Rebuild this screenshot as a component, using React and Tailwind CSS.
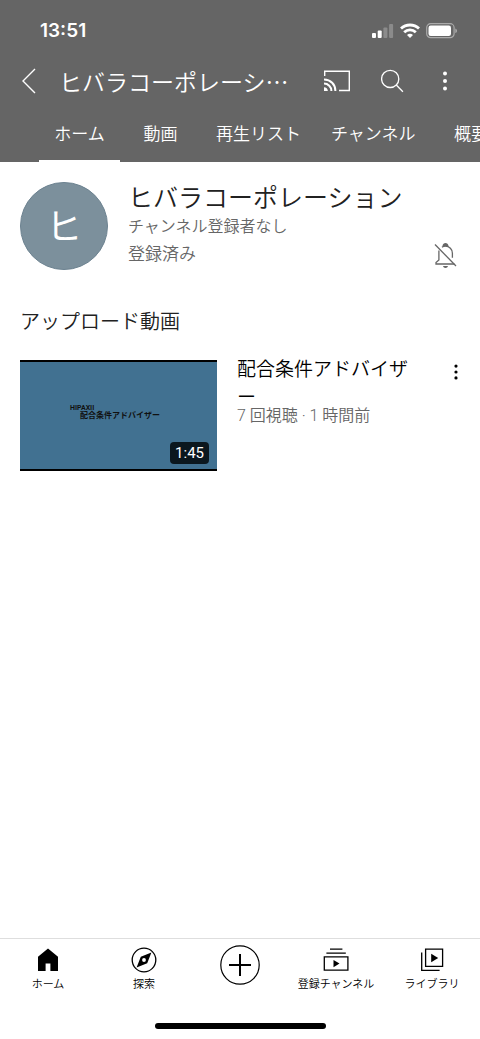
import { useState } from 'react'
import clsx from 'clsx'

const TABS = ['ホーム', '動画', '再生リスト', 'チャンネル', '概要']

const SignalIcon = () => (
  <svg width="22" height="16" viewBox="0 0 22 16" fill="#fff" aria-hidden="true">
    <rect x="0" y="10" width="4" height="5" rx="1" />
    <rect x="5.7" y="7.5" width="4" height="7.5" rx="1" />
    <rect x="11.4" y="4.5" width="4" height="10.5" rx="1" opacity="0.25" />
    <rect x="17.1" y="1" width="4" height="14" rx="1" opacity="0.25" />
  </svg>
)

const WifiIcon = () => (
  <svg width="20" height="16" viewBox="0 0 20 16" fill="none" stroke="#fff" strokeWidth="2.8" aria-hidden="true">
    <path d="M1 5.6C6 0.8 14 0.8 19 5.6" />
    <path d="M4.2 9.3c3.3-3.2 8.3-3.2 11.6 0" />
    <path d="M10 15l-3-3c1.7-1.6 4.3-1.6 6 0z" fill="#fff" stroke="none" />
  </svg>
)

const BatteryIcon = () => (
  <svg width="32" height="16" viewBox="0 0 32 16" fill="none" aria-hidden="true">
    <rect x="0.7" y="0.7" width="27.4" height="14" rx="4" stroke="#fff" strokeOpacity="0.45" strokeWidth="1.2" />
    <rect x="2.5" y="2.5" width="22.5" height="10.5" rx="2.2" fill="#fff" />
    <path d="M29.4 5.4c2 .8 2 3.8 0 4.6z" fill="#fff" fillOpacity="0.5" />
  </svg>
)

const BackIcon = () => (
  <svg width="16" height="26" viewBox="0 0 16 26" fill="none" stroke="#fff" strokeWidth="1.4" aria-hidden="true">
    <path d="M14 1L2 13l12 12" />
  </svg>
)

const CastIcon = () => (
  <svg width="28" height="22" viewBox="0 0 28 22" fill="none" stroke="#fff" strokeWidth="1.4" aria-hidden="true">
    <path d="M1.7 6V1.2h24.6v19.3H16" />
    <path d="M1 9.6c6.6 0 11.4 4.8 11.4 11.4M1 13.6c4.2 0 7.4 3.2 7.4 7.4" strokeWidth="2" />
    <path d="M1 17.2c2.2 0 3.8 1.6 3.8 3.8H1z" fill="#fff" stroke="none" />
  </svg>
)

const SearchIcon = () => (
  <svg width="24" height="24" viewBox="0 0 24 24" fill="none" stroke="#fff" strokeWidth="1.3" aria-hidden="true">
    <circle cx="9.2" cy="9.9" r="8.6" />
    <path d="M15.3 16l6.6 6.8" />
  </svg>
)

const DotsIcon = ({ size, r }) => (
  <svg width={size} height={size} viewBox={`0 0 ${size} ${size}`} fill="currentColor" aria-hidden="true">
    <circle cx={size / 2} cy={r + 0.5} r={r} />
    <circle cx={size / 2} cy={size / 2} r={r} />
    <circle cx={size / 2} cy={size - r - 0.5} r={r} />
  </svg>
)

const BellOffIcon = () => (
  <svg width="24" height="26" viewBox="0 0 24 26" fill="none" stroke="#666" strokeWidth="1.3" aria-hidden="true">
    <path d="M1 2.5l21 21.5" />
    <path d="M8 5.2c1-.7 2-1 3.4-1 4 0 7 3 7 7v4.6" />
    <path d="M4.9 8.6v9.3L2 20.5V22h18.4" />
    <path d="M8.4 4.2c.6-4.4 5.6-4.4 6.2 0zM9 24h5c-.5 2.6-4.5 2.6-5 0z" fill="#666" stroke="none" />
  </svg>
)

const HomeIcon = () => (
  <svg width="26" height="26" viewBox="0 0 26 26" aria-hidden="true">
    <path d="M13 1.6L3 9.8v14.2h7.6v-7.4h4.8v7.4H23V9.8z" />
  </svg>
)

const ExploreIcon = () => (
  <svg width="26" height="26" viewBox="0 0 26 26" aria-hidden="true">
    <circle cx="13" cy="13" r="11.8" fill="none" stroke="#000" strokeWidth="1.3" />
    <path fillRule="evenodd" d="M20.4 5.6l-4.2 10.6-10.6 4.2 4.2-10.6zM13 11.1a1.9 1.9 0 1 0 0 3.8 1.9 1.9 0 0 0 0-3.8z" />
  </svg>
)

const CreateIcon = () => (
  <svg width="40" height="40" viewBox="0 0 40 40" fill="none" stroke="#000" aria-hidden="true">
    <circle cx="20" cy="20" r="19.2" strokeWidth="1.2" />
    <path d="M20 9v22M9 20h22" strokeWidth="2" />
  </svg>
)

const SubscriptionsIcon = () => (
  <svg width="26" height="26" viewBox="0 0 26 26" fill="none" stroke="#000" strokeWidth="1.3" aria-hidden="true">
    <path d="M7 2.2h12.4M3.4 6.2h19.4" />
    <path d="M1.3 9.8h23.6v13.4H1.3z" />
    <path d="M10.5 13l6 3.6-6 3.6z" fill="#000" stroke="none" />
  </svg>
)

const LibraryIcon = () => (
  <svg width="26" height="26" viewBox="0 0 26 26" fill="none" stroke="#000" strokeWidth="1.3" aria-hidden="true">
    <path d="M6.6 2.2h17v17.2h-17z" />
    <path d="M2.7 5.6v17.7H20.6" />
    <path d="M12.2 6.8l7 4.2-7 4.2z" fill="#000" stroke="none" />
  </svg>
)

const NAV_ITEMS = [
  { label: 'ホーム', Icon: HomeIcon },
  { label: '探索', Icon: ExploreIcon },
  { label: null, Icon: CreateIcon },
  { label: '登録チャンネル', Icon: SubscriptionsIcon },
  { label: 'ライブラリ', Icon: LibraryIcon },
]

const App = () => {
  const [activeTab, setActiveTab] = useState('ホーム')

  return (
    <div
      lang="ja"
      className="flex min-h-screen flex-col bg-white font-['Roboto','Noto_Sans_CJK_JP',sans-serif] font-[350] text-[#212121]"
    >
      {/* Header */}
      <header className="bg-[#656565] text-white">
        <div className="flex h-[60px] items-center justify-between pt-px pr-[22px] pl-10">
          <span className="pt-px font-['Inter',sans-serif] text-[19px] font-semibold">13:51</span>
          <div className="flex items-center gap-[6px]">
            <SignalIcon />
            <WifiIcon />
            <BatteryIcon />
          </div>
        </div>

        <div className="flex h-[42px] items-center pr-[25px] pl-[21px]">
          <button aria-label="戻る">
            <BackIcon />
          </button>
          <h1 className="ml-[22px] min-w-0 flex-1 font-['Noto_Sans_CJK_JP',sans-serif] text-[23px] whitespace-nowrap">
            ヒバラコーポレーシ…
          </h1>
          <div className="flex items-center gap-[30px]">
            <button aria-label="キャスト">
              <CastIcon />
            </button>
            <button aria-label="検索">
              <SearchIcon />
            </button>
            <button aria-label="メニュー">
              <DotsIcon size={20} r={2} />
            </button>
          </div>
        </div>

        {/* Tabs */}
        <nav className="flex h-[60px] overflow-hidden pl-[39px]">
          {TABS.map((tab) => (
            <button
              key={tab}
              onClick={() => setActiveTab(tab)}
              className={clsx(
                'min-w-[81px] shrink-0 border-b-2 px-[15px] pt-2 text-[17px]',
                activeTab === tab ? 'border-white' : 'border-transparent'
              )}
            >
              {tab}
            </button>
          ))}
        </nav>
      </header>

      <main className="flex-1 px-5">
        {/* Channel */}
        <section className="flex pt-5">
          <div className="flex size-[88px] shrink-0 items-center justify-center rounded-full border border-[#6c8290] bg-[#7c909c] pt-1 text-4xl font-normal text-white">
            ヒ
          </div>
          <div className="ml-5 flex-1 pt-px">
            <h2 className="text-[25px] leading-8">ヒバラコーポレーション</h2>
            <p className="text-base text-[#666]">チャンネル登録者なし</p>
            <div className="flex h-8 items-center justify-between pr-[2px] text-[17px] text-[#666]">
              <span>登録済み</span>
              <button aria-label="通知オフ">
                <BellOffIcon />
              </button>
            </div>
          </div>
        </section>

        {/* Uploads */}
        <section className="pt-[35px]">
          <h3 className="text-xl leading-8">アップロード動画</h3>
          <article className="mt-[22px] flex">
            <div className="relative flex h-[111px] w-[197px] shrink-0 flex-col justify-center border-y-2 border-black bg-[#417191] pb-2 pl-[50px] font-bold text-[#111]">
              <span className="text-[7px] leading-2">HIPAXII</span>
              <span className="pl-[10px] text-[8px] leading-2">配合条件アドバイザー</span>
              <span className="absolute right-2 bottom-[5px] rounded bg-[#0b171e] px-[5px] text-[15px] leading-[22px] font-normal text-white">
                1:45
              </span>
            </div>
            <div className="-mt-1 ml-5 min-w-0 flex-1">
              <h4 className="text-[19px] leading-7 text-black">配合条件アドバイザー</h4>
              <p className="-mt-1 text-base leading-4 text-[#666]">7 回視聴 · 1 時間前</p>
            </div>
            <button aria-label="その他" className="-mr-1 ml-4 flex h-6 w-6 items-center justify-end text-black">
              <DotsIcon size={16} r={1.6} />
            </button>
          </article>
        </section>
      </main>

      {/* Bottom navigation */}
      <footer className="border-t border-[#dedede]">
        <nav className="grid h-[60px] grid-cols-5">
          {NAV_ITEMS.map(({ label, Icon }) => (
            <button
              key={label || 'create'}
              aria-label={label || '作成'}
              className={clsx(
                'flex flex-col items-center text-[11px] leading-6 text-black',
                label ? 'pt-2' : 'pt-[6px]'
              )}
            >
              <Icon />
              {label && <span className="whitespace-nowrap">{label}</span>}
            </button>
          ))}
        </nav>
        <div className="flex h-10 items-center justify-center pt-[14px]">
          <div className="h-[6px] w-[171px] rounded-full bg-black" />
        </div>
      </footer>
    </div>
  )
}

export default App
